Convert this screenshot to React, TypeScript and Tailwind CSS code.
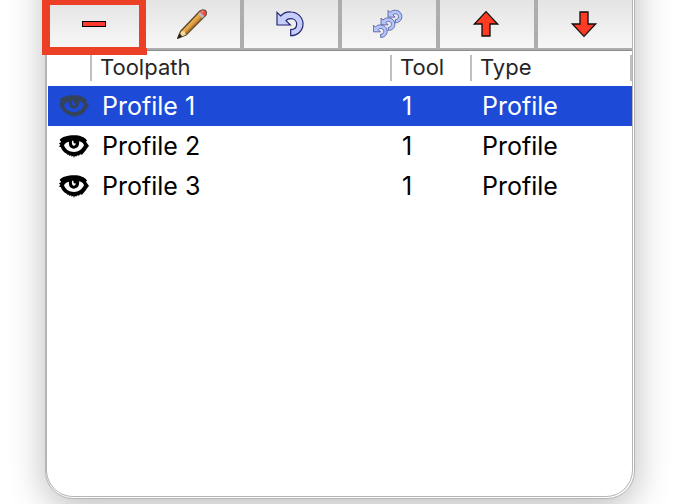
import React, { useState } from "react";

interface Toolpath {
  name: string;
  tool: number;
  type: string;
}

interface IconProps {
  className?: string;
}

const toolpaths: Toolpath[] = [
  { name: "Profile 1", tool: 1, type: "Profile" },
  { name: "Profile 2", tool: 1, type: "Profile" },
  { name: "Profile 3", tool: 1, type: "Profile" },
];

const UNDO_PATH =
  "M6 10 L17 21 C25 12 36 8 48 9 C68 10 84 25 84 45 C84 66 67 80 47 80 V62 C58 62 65 55 65 45 C65 35 57 29 48 29 C41 29 35 32 33 35 L46 48 H6 Z";

const ARROW_PATH = "M45 8 L80 45 H57 V81 H33 V45 H10 Z";

const MinusIcon: React.FC = () => (
  <svg viewBox="0 0 90 90" className="size-[30px]" aria-hidden="true">
    <rect x="10.5" y="37.5" width="69" height="15" fill="#ff3b30" stroke="#000" strokeWidth="3" />
  </svg>
);

const PencilIcon: React.FC = () => (
  <svg viewBox="0 0 90 90" className="size-[30px]" aria-hidden="true">
    <path
      d="M2 88 L11 67 L68 7 Q76 0 84 4 Q91 11 86 19 L27 78 Z"
      fill="#d9993c"
      stroke="#5c4a34"
      strokeWidth="4"
      strokeLinejoin="round"
    />
    <path d="M16 66 L66 14 L70 18 L20 70 Z" fill="#e6ae52" />
    <path d="M23 75 L76 22 L79 25 L27 76 Z" fill="#a8692a" />
    <path d="M12 68 L22 66 L26 77 L8 84 Z" fill="#f3dda0" />
    <path d="M1 89 L7 73 L16 82 Z" fill="#2b2218" />
    <path d="M63 14 L69 9 L82 22 L76 28 Z" fill="#b9b5bd" />
    <path d="M69 8 Q77 1 83 5 Q89 12 83 21 Z" fill="#f8434e" />
    <path d="M73 8 Q77 4 80 6 L76 12 Z" fill="#ff8c92" />
  </svg>
);

const UndoIcon: React.FC = () => (
  <svg viewBox="0 0 90 90" className="size-[30px]" aria-hidden="true">
    <path d={UNDO_PATH} fill="#c5cdfb" stroke="#23236e" strokeWidth="3.5" />
  </svg>
);

const UndoAllIcon: React.FC = () => (
  <svg viewBox="0 0 90 90" className="size-[30px]" aria-hidden="true">
    <g fill="#b4c4ff" stroke="#545f9c" strokeWidth="5">
      <path d={UNDO_PATH} transform="translate(42 -1) scale(.53)" />
      <path d={UNDO_PATH} transform="translate(21 22) scale(.53)" />
      <path d={UNDO_PATH} transform="translate(-2 43) scale(.53)" />
    </g>
  </svg>
);

const ArrowIcon: React.FC<IconProps> = ({ className = "" }) => (
  <svg viewBox="0 0 90 90" className={`size-[30px] ${className}`} aria-hidden="true">
    <path d={ARROW_PATH} fill="#ff3b24" stroke="#111" strokeWidth="4" />
  </svg>
);

const EyeIcon: React.FC<IconProps> = ({ className = "" }) => (
  <svg viewBox="0 0 90 72" className={`h-6 w-[30px] ${className}`} aria-hidden="true">
    <path
      fill="currentColor"
      fillRule="evenodd"
      d="M2 18 C8 9 26 4 45 4 C64 4 77 10 84 19 L81 23 L90 36 C85 40 83 47 76 54 L69 62 L63 61 L60 65 L55 64 L51 68 L48 65 L45 71 L42 65 L38 68 L36 64 L31 66 L30 62 L25 63 L25 60 C14 56 8 48 6 40 L0 38 L4 33 L0 28 L7 24 Z M15 34 C19 47 31 54 45 54 C59 54 70 45 75 33 C72 27 68 24 60 22 C62 34 57 43 45 44 C34 43 28 35 30 23 C22 24 18 28 15 34 Z M39 20 C38 29 40 35 45 35 C49 35 50 32 50 27 C46 30 43 27 43 20 Z"
    />
  </svg>
);

const actions = [
  { label: "Remove toolpath", icon: <MinusIcon /> },
  { label: "Edit toolpath", icon: <PencilIcon /> },
  { label: "Recalculate toolpath", icon: <UndoIcon /> },
  { label: "Recalculate all toolpaths", icon: <UndoAllIcon /> },
  { label: "Move up", icon: <ArrowIcon /> },
  { label: "Move down", icon: <ArrowIcon className="rotate-180" /> },
];

const Toolbar: React.FC = () => (
  <div className="grid grid-cols-6 gap-1 border-b-2 border-[#adadad] bg-[#adadad]">
    {actions.map((action, index) => (
      <button
        key={action.label}
        type="button"
        aria-label={action.label}
        className="relative flex h-12 items-center justify-center bg-linear-to-b from-[#e4e4e4] to-[#f7f7f7] pr-0.5"
      >
        {action.icon}
        {index === 0 && (
          <span className="absolute -top-[3px] -right-[5px] -bottom-[7px] -left-1.5 border-8 border-[#eb4026]" />
        )}
      </button>
    ))}
  </div>
);

const ToolpathTable: React.FC = () => {
  const [selected, setSelected] = useState(0);

  return (
    <div className="border-t border-[#8c8c8c]">
      <table className="w-full table-fixed border-collapse text-left">
        <colgroup>
          <col className="w-[42px]" />
          <col />
          <col className="w-20" />
          <col className="w-[162px]" />
        </colgroup>
        <thead className="text-[22px] text-[#262626]">
          <tr className="h-[35px] align-top">
            <th aria-label="Visible" className="p-0" />
            <th className="p-0 pt-1 font-normal">
              <div className="border-l-2 border-[#bfbfbf] pb-0.5 pl-2 leading-6">Toolpath</div>
            </th>
            <th className="p-0 pt-1 font-normal">
              <div className="border-l-2 border-[#bfbfbf] pb-0.5 pl-2 leading-6">Tool</div>
            </th>
            <th className="p-0 pt-1 font-normal">
              <div className="border-x-2 border-[#bfbfbf] pb-0.5 pl-2 leading-6">Type</div>
            </th>
          </tr>
        </thead>
        <tbody className="text-[25px] leading-10">
          {toolpaths.map((toolpath, index) => (
            <tr
              key={toolpath.name}
              onClick={() => setSelected(index)}
              className={index === selected ? "h-10 bg-[#1d4bd8] text-white" : "h-10 text-black"}
            >
              <td className="p-0 pl-[11px]">
                <EyeIcon className={index === selected ? "block text-[#34435a]" : "block text-black"} />
              </td>
              <td className="p-0 pl-3">{toolpath.name}</td>
              <td className="p-0 pl-3">{toolpath.tool}</td>
              <td className="p-0 pl-3">{toolpath.type}</td>
            </tr>
          ))}
        </tbody>
      </table>
    </div>
  );
};

const App: React.FC = () => {
  return (
    <main className="flex min-h-screen flex-col overflow-hidden bg-white px-[45px] pb-[5px] font-['Inter','Liberation_Sans',sans-serif]">
      {/* the window starts above the visible area, so its shadow does too */}
      <section className="-mt-16 flex grow flex-col rounded-[28px] border border-[#b4b4b4] bg-white pt-[63px] pr-px pb-px shadow-[0_8px_36px_rgba(0,0,0,0.27)]">
        <div className="grow rounded-b-[27px] border-x border-b border-[#b4b4b4] pl-px">
          <Toolbar />
          <ToolpathTable />
        </div>
      </section>
    </main>
  );
};

export default App;
